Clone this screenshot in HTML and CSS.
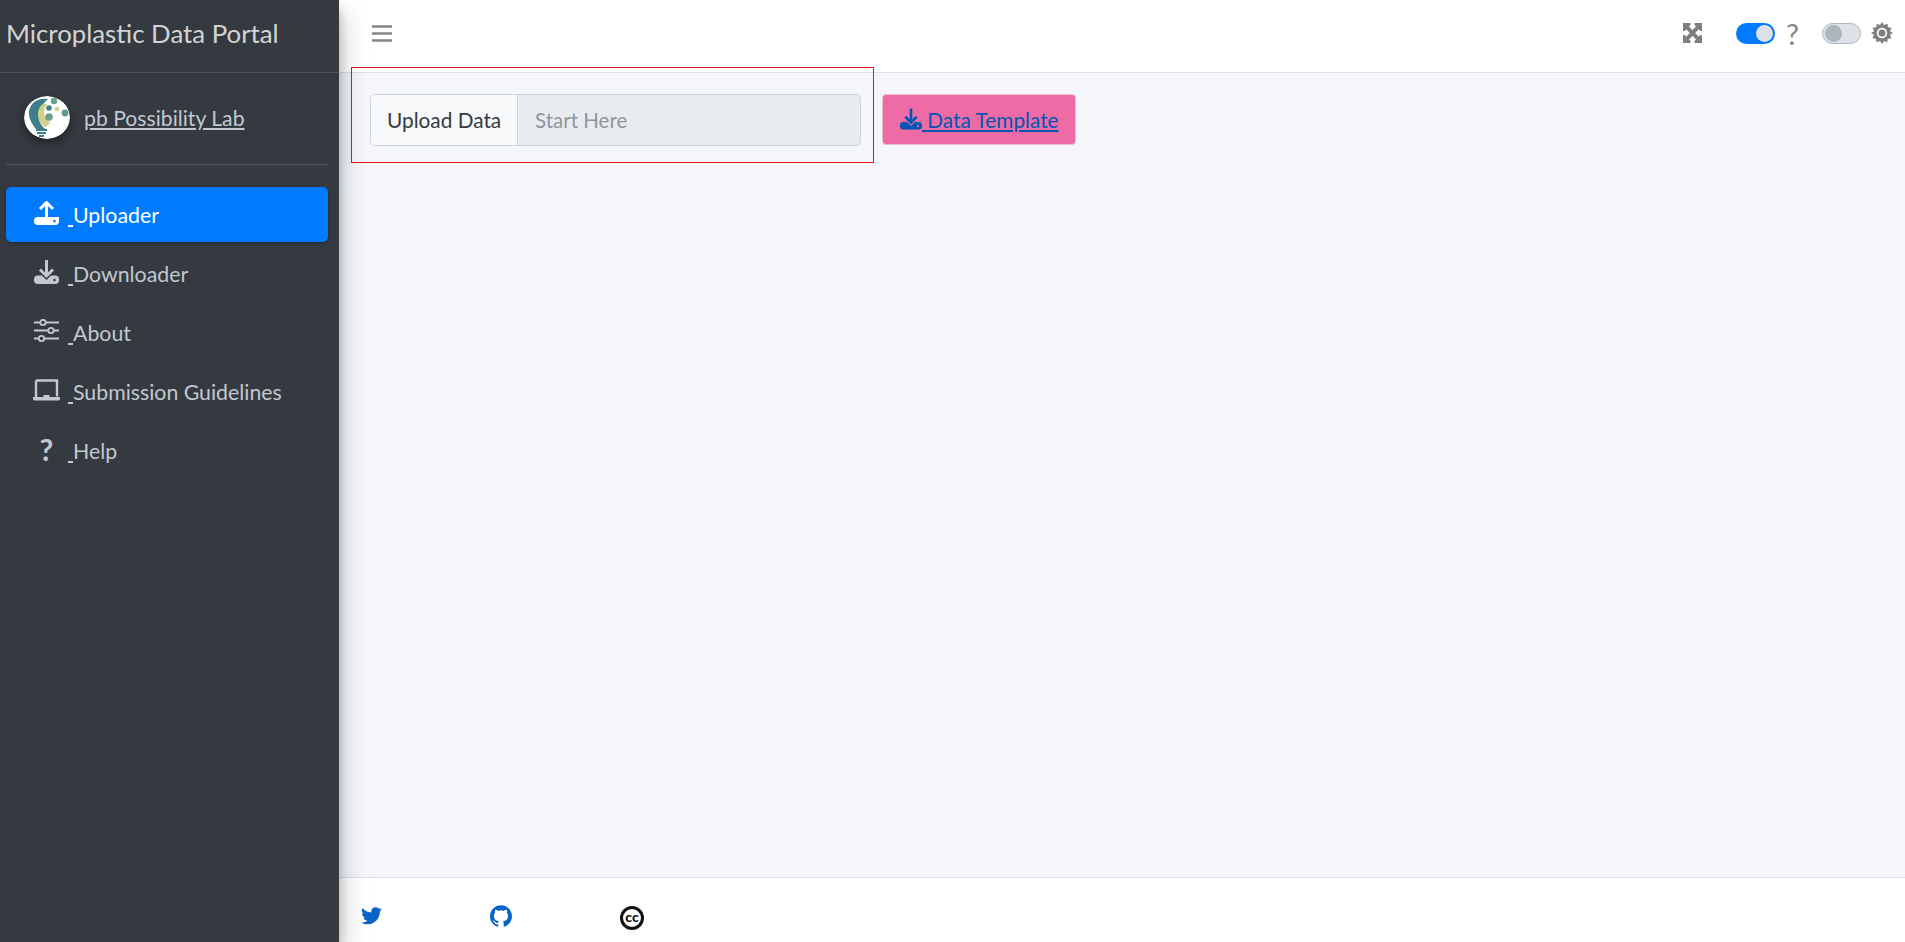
FILE: index.html
```html
<!DOCTYPE html>
<html lang="en">
<head>
  <meta charset="UTF-8" />
  <meta name="viewport" content="width=device-width, initial-scale=1.0"/>
  <title>Microplastic Data Portal</title>
  <link rel="stylesheet" href="styles.css">
</head>
<body>
  <div class="wrapper">
    <aside class="sidebar">
      <div class="brand">Microplastic Data Portal</div>
      <div class="side-inner">
        <div class="user-panel">
          <svg class="logo" viewBox="0 0 46 43">
            <ellipse cx="23" cy="21.500" rx="23" ry="21.500" fill="#fff"/>
            <path d="M24 3C12 1 4 9 5 19c.5 5 3 9 7 14h9c-5-5-7-9-6-15 1-6 4-10 9-15z" fill="#3f7f8c"/>
            <path d="M19 8c-5 3-6 10-4 16 1 3 3 5 6 7 3-1 4-3 5-5-6-3-8-11-3-18z" fill="#cfd08a"/>
            <rect x="12" y="33" width="11" height="2" fill="#3f7f8c"/>
            <rect x="13" y="36" width="9" height="2" fill="#3f7f8c"/>
            <rect x="15" y="39" width="5" height="2" fill="#3f7f8c"/>
            <circle cx="30" cy="5" r="3.200" fill="#6ba08f"/>
            <circle cx="25" cy="12" r="2.800" fill="#3f7f8c"/>
            <circle cx="33" cy="13" r="2.300" fill="#cfd08a"/>
            <circle cx="41" cy="17" r="3.400" fill="#5f9a92"/>
            <circle cx="25" cy="21" r="3.800" fill="#6ba08f"/>
          </svg>
          <a class="user-link" href="#">pb Possibility Lab</a>
        </div>
        <nav class="nav-list">
          <a class="nav-item active" href="#">
            <svg class="nav-icon" viewBox="0 0 25 24"><path d="M6 8l6.500-6.500L19 8M12.500 2v15" fill="none" stroke="currentColor" stroke-width="3"/><path fill-rule="evenodd" d="M3.500 16H25v0 4.500c0 2-1.500 3.500-3.500 3.500h-18C1.500 24 0 22.500 0 20.500v-1C0 17.500 1.500 16 3.500 16zM20.500 18.800a1.300 1.300 0 1 0 0 2.600 1.300 1.300 0 0 0 0-2.600z"/></svg>
            <span class="space">&nbsp;</span><span>Uploader</span>
          </a>
          <a class="nav-item" href="#">
            <svg class="nav-icon" viewBox="0 0 25 24"><path d="M6 9.500l6.500 6.500L19 9.500M12.500 0v15" fill="none" stroke="currentColor" stroke-width="3"/><path fill-rule="evenodd" d="M3.500 15.500H8l4.500 4.500 4.500-4.500h4.500c2 0 3.500 1.500 3.500 3.500v1.500c0 2-1.500 3.500-3.500 3.500h-18C1.500 24 0 22.500 0 20.500V19c0-2 1.500-3.500 3.500-3.500zM20.500 18.800a1.300 1.300 0 1 0 0 2.600 1.300 1.300 0 0 0 0-2.600z"/></svg>
            <span class="space">&nbsp;</span><span>Downloader</span>
          </a>
          <a class="nav-item" href="#">
            <svg class="nav-icon" viewBox="0 0 25 24"><path d="M0 3.500h25M0 11.500h25M0 19.500h25" stroke="currentColor" stroke-width="2.200" fill="none"/><circle cx="9" cy="3.500" r="2.700" fill="#343a40" stroke="currentColor" stroke-width="1.800"/><circle cx="17" cy="11.500" r="2.700" fill="#343a40" stroke="currentColor" stroke-width="1.800"/><circle cx="7.500" cy="19.500" r="2.700" fill="#343a40" stroke="currentColor" stroke-width="1.800"/></svg>
            <span class="space">&nbsp;</span><span>About</span>
          </a>
          <a class="nav-item" href="#">
            <svg class="nav-icon laptop" viewBox="0 0 27 22"><path d="M3 1.500h21v16M3 18V1.500" stroke="currentColor" stroke-width="2.400" fill="none"/><path d="M0 18h10.500v-2h6v2H27v2c0 .8-.6 1.400-1.400 1.400H1.400C.6 21.400 0 20.800 0 20z"/></svg>
            <span class="space">&nbsp;</span><span>Submission Guidelines</span>
          </a>
          <a class="nav-item" href="#">
            <span class="nav-icon help-icon">?</span>
            <span class="space">&nbsp;</span><span>Help</span>
          </a>
        </nav>
      </div>
    </aside>

    <div class="main">
      <header class="topbar">
        <svg class="burger" viewBox="0 0 20 17"><path d="M0 1.500h20M0 8.500h20M0 15.500h20" stroke="#858585" stroke-width="2.400"/></svg>
        <div class="top-right">
          <svg class="expand" viewBox="0 32 448 448" preserveAspectRatio="none"><path d="M448 344v112a23.940 23.940 0 0 1-24 24H312c-21.390 0-32.090-25.900-17-41l36.200-36.200L224 295.600 116.770 402.900 153 439c15.090 15.100 4.390 41-17 41H24a23.940 23.940 0 0 1-24-24V344c0-21.400 25.890-32.100 41-17l36.190 36.200L184.460 256 77.180 148.700 41 185c-15.100 15.100-41 4.400-41-17V56a23.940 23.940 0 0 1 24-24h112c21.390 0 32.090 25.900 17 41l-36.200 36.200L224 216.400l107.230-107.300L295 73c-15.090-15.100-4.390-41 17-41h112a23.940 23.940 0 0 1 24 24v112c0 21.400-25.890 32.100-41 17l-36.190-36.200L263.540 256l107.280 107.300L407 327.100c15.100-15.200 41-4.500 41 16.900z" fill="#7f7f7f" stroke="#7f7f7f" stroke-width="36"/></svg>
          <span class="switch on"><span class="knob"></span></span>
          <span class="q">?</span>
          <span class="switch off"><span class="knob"></span></span>
          <svg class="gear" viewBox="0 0 22 22"><path d="M11 0l2 3 3.500-1.300.5 3.600 3.600.5L19 9.300 22 11l-3 1.700 1.300 3.500-3.600.5-.5 3.600L13 19l-2 3-2-3-3.500 1.300-.5-3.600-3.600-.5L3 12.700 0 11l3-1.700-1.300-3.500 3.600-.5.5-3.600L9 3z" fill="#7f7f7f"/><circle cx="11" cy="11" r="5.200" fill="#fff"/><circle cx="11" cy="11" r="3.500" fill="#7f7f7f"/></svg>
        </div>
      </header>

      <main class="content">
        <div class="upload-box">
          <div class="input-group">
            <span class="input-label">Upload Data</span>
            <span class="input-field">Start Here</span>
          </div>
        </div>
        <a class="template-btn" href="#">
          <svg class="btn-icon" viewBox="0 0 25 24"><path d="M6 9.500l6.500 6.500L19 9.500M12.500 0v15" fill="none" stroke="#0056b3" stroke-width="3"/><path fill-rule="evenodd" d="M3.500 15.500H8l4.500 4.500 4.500-4.500h4.500c2 0 3.500 1.500 3.500 3.500v1.500c0 2-1.500 3.500-3.500 3.500h-18C1.500 24 0 22.500 0 20.500V19c0-2 1.500-3.500 3.500-3.500zM20.500 18.800a1.300 1.300 0 1 0 0 2.600 1.300 1.300 0 0 0 0-2.600z"/></svg>
          <span>&nbsp;Data Template</span>
        </a>
      </main>

      <footer class="footer">
        <svg class="twitter" viewBox="0 0 24 20"><path d="M23.950 2.400c-.9.400-1.800.650-2.800.800 1-.600 1.800-1.550 2.150-2.700-.950.550-2 .950-3.100 1.200C19.300.700 18 .100 16.600.100c-2.700 0-4.900 2.200-4.900 4.900 0 .400.050.750.100 1.100C7.700 5.900 4.100 3.950 1.650.950c-.400.700-.650 1.550-.650 2.450 0 1.700.850 3.200 2.200 4.100-.800 0-1.550-.250-2.200-.600v.050c0 2.400 1.700 4.400 3.950 4.850-.400.100-.850.150-1.300.150-.300 0-.650 0-.950-.100.650 2 2.450 3.400 4.600 3.450-1.700 1.300-3.800 2.100-6.100 2.100-.400 0-.800 0-1.200-.050C2.200 18.750 4.800 19.550 7.550 19.550c9.050 0 14-7.500 14-14v-.650c.950-.700 1.800-1.550 2.400-2.500z"/></svg>
        <svg class="github" viewBox="0 0 24 24"><path d="M12 .300C5.370.300 0 5.670 0 12.300c0 5.300 3.440 9.800 8.210 11.390.600.110.820-.260.820-.580 0-.290-.010-1.040-.020-2.040-3.340.720-4.040-1.610-4.040-1.610-.550-1.390-1.330-1.760-1.330-1.760-1.090-.740.080-.730.080-.730 1.200.090 1.840 1.240 1.840 1.240 1.070 1.840 2.810 1.300 3.500 1 .110-.780.420-1.310.760-1.610-2.670-.300-5.470-1.330-5.470-5.930 0-1.310.470-2.380 1.240-3.220-.140-.300-.540-1.520.100-3.180 0 0 1.010-.320 3.300 1.230.960-.270 1.980-.400 3-.400s2.040.130 3 .400c2.280-1.550 3.290-1.230 3.290-1.230.640 1.650.240 2.880.120 3.180.760.840 1.230 1.910 1.230 3.220 0 4.610-2.810 5.630-5.480 5.920.420.360.810 1.100.810 2.220 0 1.610-.010 2.900-.010 3.290 0 .320.210.690.830.570C20.570 22.090 24 17.590 24 12.300c0-6.630-5.370-12-12-12z"/></svg>
        <span class="cc">cc</span>
      </footer>
    </div>
  </div>
</body>
</html>
```

FILE: styles.css
```css
* {
  box-sizing: border-box;
}

html, body {
  margin: 0;
  height: 100%;
  overflow: hidden;
}

body {
  font-family: "Lato", "Noto Sans", sans-serif;
  font-size: 21px;
  color: #212529;
}

.wrapper {
  display: flex;
  height: 942px;
}

/* sidebar */
.sidebar {
  width: 339px;
  flex-shrink: 0;
  background-color: #343a40;
  color: #c2c7d0;
  box-shadow: 0 14px 28px rgba(0,0,0,0.25), 0 10px 10px rgba(0,0,0,0.22);
  z-index: 2;
}

.brand {
  height: 73px;
  padding: 15px 0 0 6px;
  font-size: 25.800px;
  line-height: 36px;
  color: rgba(255,255,255,0.8);
  border-bottom: 1px solid #4b545c;
}

.side-inner {
  padding: 0 11px 0 6px;
}

.user-panel {
  display: flex;
  align-items: center;
  gap: 14px;
  height: 92px;
  padding-left: 18px;
  padding-bottom: 3px;
  border-bottom: 1px solid #4f5962;
}

.logo {
  width: 46px;
  height: 43px;
  border-radius: 50%;
  box-shadow: 0 4px 9px rgba(0,0,0,0.4);
}

.user-link {
  padding-top: 2px;
  font-size: 21.200px;
  color: #c2c7d0;
}

.nav-list {
  display: flex;
  flex-direction: column;
  gap: 4px;
  margin-top: 22px;
}

.nav-item {
  display: flex;
  align-items: center;
  height: 55px;
  padding-left: 28px;
  font-size: 21.300px;
  color: #c2c7d0;
  text-decoration: none;
  border-radius: 5px;
}

.nav-item.active {
  background-color: #007bff;
  color: #fff;
  box-shadow: 0 1px 3px rgba(0,0,0,0.3);
}

.nav-icon {
  width: 25px;
  height: 24px;
  margin-bottom: 3px;
  fill: currentColor;
  flex-shrink: 0;
}

.laptop {
  width: 27px;
  height: 22px;
  margin-left: -1px;
  margin-right: -1px;
}

.help-icon {
  font-size: 30px;
  line-height: 24px;
  font-weight: 700;
  text-align: center;
}

.space {
  width: 5px;
  margin-left: 9px;
  overflow: hidden;
  text-decoration: underline;
}

/* top bar */
.main {
  flex: 1;
  display: flex;
  flex-direction: column;
  min-width: 0;
}

.topbar {
  display: flex;
  align-items: center;
  justify-content: space-between;
  height: 73px;
  flex-shrink: 0;
  padding: 0 12px 6px 33px;
  background-color: #fff;
  border-bottom: 1px solid #dee2e6;
}

.burger {
  width: 20px;
  height: 17px;
}

.top-right {
  display: flex;
  align-items: center;
}

.expand {
  width: 19px;
  height: 20px;
  margin-right: 34px;
  overflow: hidden;
}

.switch {
  display: flex;
  align-items: center;
  width: 39px;
  height: 21px;
  border-radius: 11px;
  padding: 2px;
}

.switch .knob {
  width: 17px;
  height: 17px;
  border-radius: 50%;
}

.switch.on {
  justify-content: flex-end;
  background-color: #007bff;
}

.switch.on .knob {
  background-color: #dee2e6;
}

.switch.off {
  background-color: #dee2e6;
  border: 1px solid #adb5bd;
}

.switch.off .knob {
  background-color: #adb5bd;
}

.q {
  width: 13px;
  margin: 0 23px 0 11px;
  font-size: 29px;
  line-height: 1;
  color: #858585;
}

.gear {
  width: 22px;
  height: 22px;
  margin-left: 10px;
}

/* content */
.content {
  flex: 1;
  display: flex;
  align-items: flex-start;
  gap: 8px;
  padding-left: 12px;
  background-color: #f4f6f9;
}

.upload-box {
  width: 523px;
  height: 96px;
  margin-top: -6px;
  padding: 26px 12px 0 18px;
  border: 1px solid #e8141c;
}

.input-group {
  display: flex;
  height: 52px;
  border: 1px solid #ced4da;
  border-radius: 5px;
  overflow: hidden;
  background-color: #e9ecef;
}

.input-label {
  width: 147px;
  padding: 0 16px;
  line-height: 49px;
  font-size: 20.800px;
  color: #343a40;
  white-space: nowrap;
  background-color: #f8f9fa;
  border-right: 1px solid #ced4da;
}

.input-field {
  padding-left: 17px;
  line-height: 51px;
  font-size: 20.500px;
  color: #8f979e;
}

.template-btn {
  display: flex;
  align-items: center;
  height: 51px;
  margin-top: 21px;
  padding: 0 16px 1px 17px;
  font-size: 20.800px;
  color: #0056b3;
  background-color: #ee6ba6;
  border: 1px solid #e9bcd2;
  border-radius: 4px;
  white-space: nowrap;
}

.btn-icon {
  width: 22px;
  height: 22px;
  fill: #0056b3;
  flex-shrink: 0;
}

/* footer */
.footer {
  display: flex;
  align-items: flex-start;
  height: 65px;
  flex-shrink: 0;
  padding: 27px 0 0 22px;
  background-color: #fff;
  border-top: 1px solid #dee2e6;
}

.twitter {
  width: 21px;
  height: 18px;
  margin-top: 2px;
  fill: #0a64c8;
}

.github {
  width: 22px;
  height: 22px;
  margin-left: 108px;
  fill: #0a64c8;
}

.cc {
  width: 24px;
  height: 24px;
  margin: 1px 0 0 108px;
  border: 3px solid #111;
  border-radius: 50%;
  color: #111;
  font-size: 14px;
  font-weight: 900;
  line-height: 16px;
  text-align: center;
}
```
